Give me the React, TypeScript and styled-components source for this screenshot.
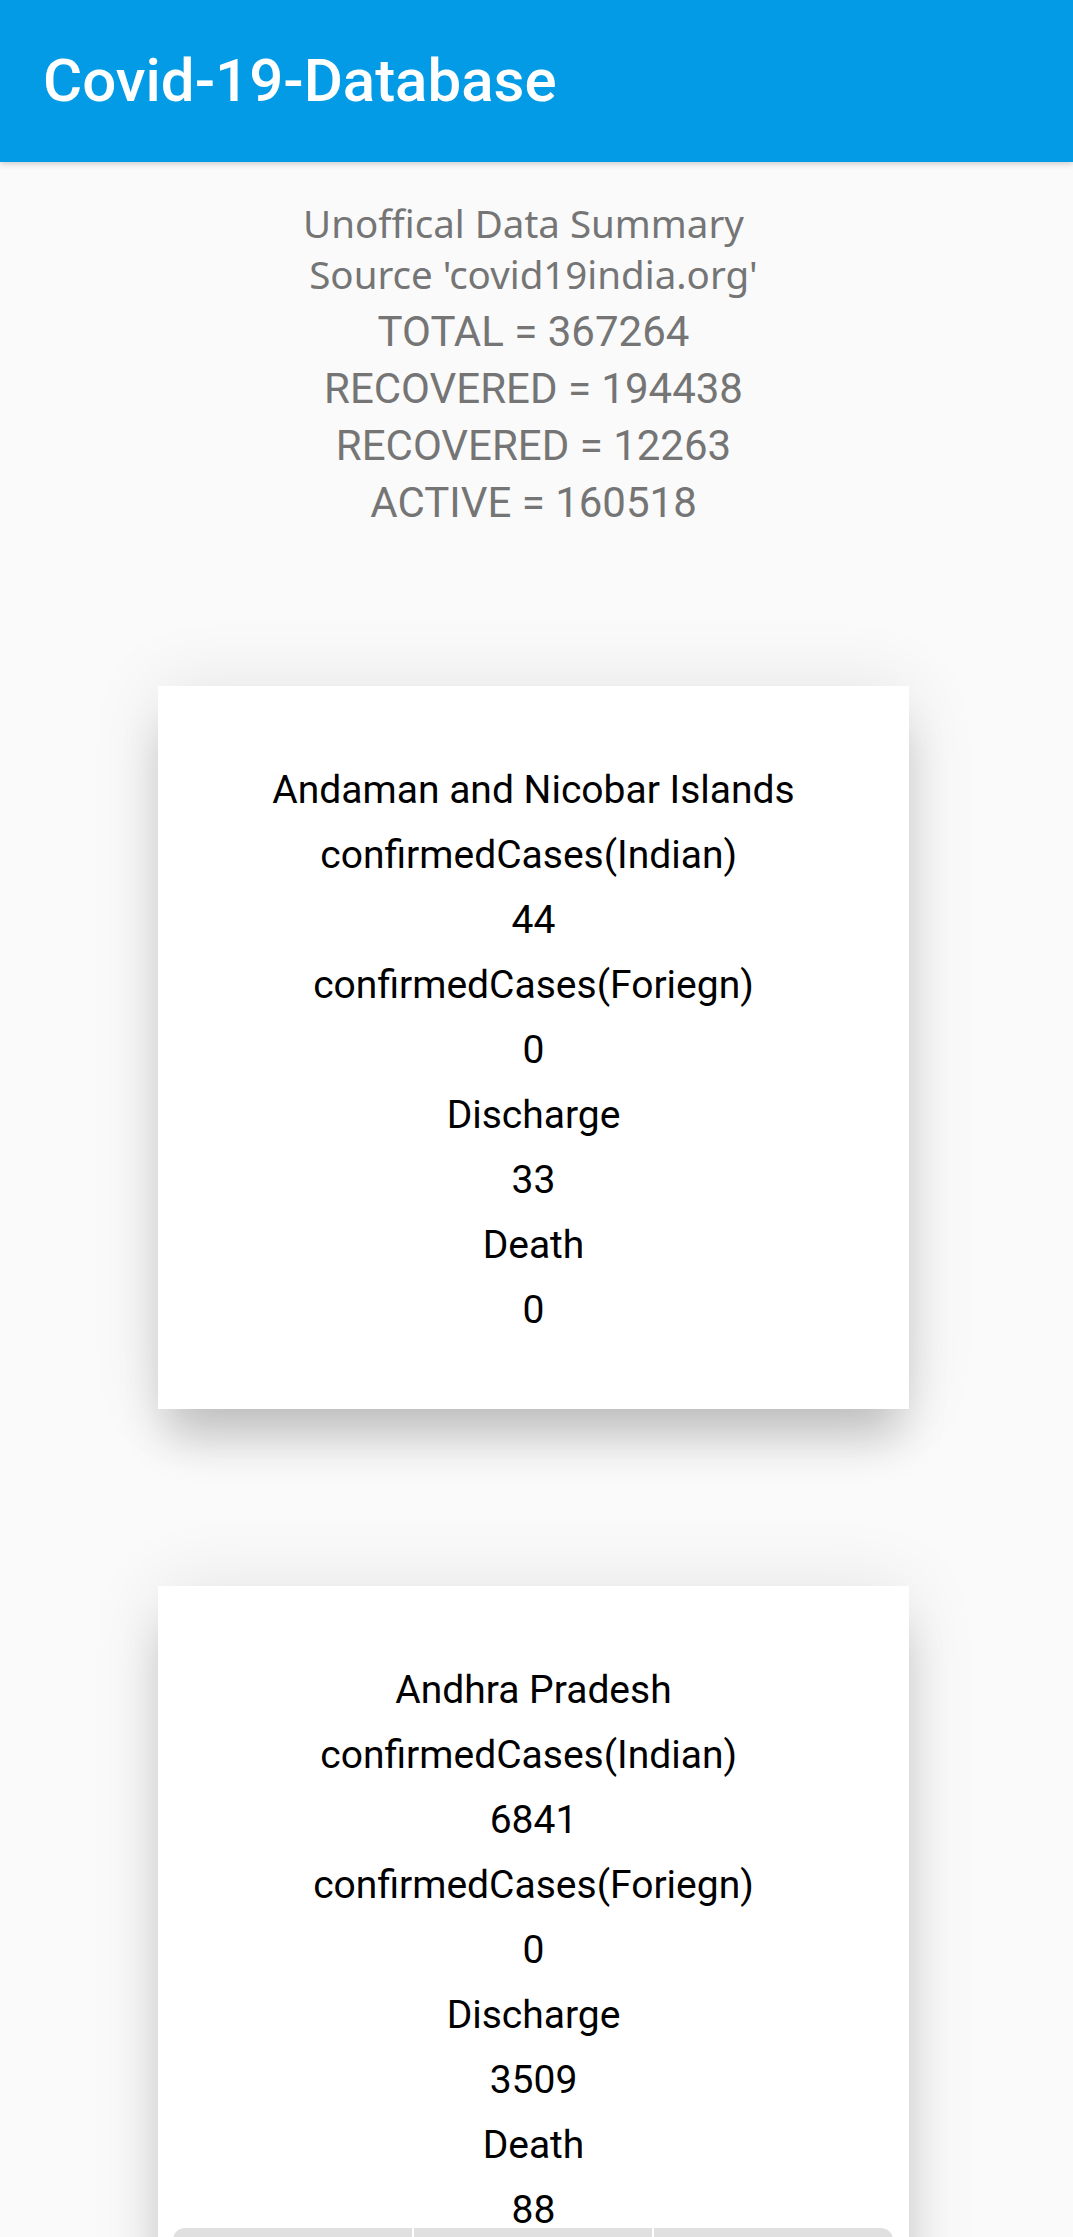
import React from "react";
import styled, { createGlobalStyle } from "styled-components";

const GlobalStyle = createGlobalStyle`
  html, body {
    margin: 0;
    padding: 0;
    background: #fafafa;
    font-family: Roboto, "Liberation Sans", Arial, sans-serif;
  }
  * { box-sizing: border-box; }
`;

const AppBar = styled.header`
  height: 162px;
  background: #039be5;
  display: flex;
  align-items: center;
  padding-left: 43px;
  box-shadow: 0 2px 6px rgba(0, 0, 0, 0.18);
  position: relative;
  z-index: 2;
`;

const Title = styled.h1`
  margin: 0;
  color: #ffffff;
  font-family: Roboto, "Liberation Sans", sans-serif;
  font-weight: 500;
  font-size: 60px;
  line-height: 1;
`;

const Main = styled.main`
  padding-right: 6px;
`;

const Summary = styled.section`
  padding: 36px 0 71px;
  text-align: center;
  color: #757575;
`;

const SummaryHead = styled.div`
  font-family: "Noto Sans", "Open Sans", sans-serif;
  font-size: 38.5px;
  line-height: 51px;
  white-space: pre;
  margin-bottom: 3px;
`;

const SummaryStat = styled.div`
  font-family: Roboto, sans-serif;
  font-size: 42px;
  line-height: 57px;
`;

const Item = styled.div<{ $top: number; $bottom: number }>`
  overflow: hidden;
  padding: ${(p) => p.$top}px 0 ${(p) => p.$bottom}px;
`;

const Card = styled.article`
  width: 751px;
  margin: 0 auto;
  background: #ffffff;
  padding: 84px 0 78px;
  display: flex;
  flex-direction: column;
  align-items: center;
  gap: 24px;
  box-shadow: 0 36px 44px -8px rgba(0, 0, 0, 0.2), 0 0 70px rgba(0, 0, 0, 0.09);
`;

const Line = styled.div`
  font-family: Roboto, sans-serif;
  font-size: 39px;
  line-height: 41px;
  color: #000000;
  white-space: pre;
`;

const BottomBar = styled.div`
  position: fixed;
  left: 173px;
  width: 720px;
  bottom: -20px;
  height: 29px;
  display: flex;
  gap: 2px;
  z-index: 5;
`;

const Segment = styled.div<{ $pos: "left" | "mid" | "right" }>`
  flex: 1;
  background: #e0e0e0;
  border-top-left-radius: ${(p) => (p.$pos === "left" ? "12px" : "0")};
  border-top-right-radius: ${(p) => (p.$pos === "right" ? "12px" : "0")};
`;

type StateData = {
  name: string;
  indian: string;
  foreign: string;
  discharge: string;
  death: string;
};

const states: StateData[] = [
  { name: "Andaman and Nicobar Islands", indian: "44", foreign: "0", discharge: "33", death: "0" },
  { name: "Andhra Pradesh", indian: "6841", foreign: "0", discharge: "3509", death: "88" },
];

const StateCard: React.FC<{ s: StateData }> = ({ s }) => (
  <Card>
    <Line>{s.name}</Line>
    <Line>{"confirmedCases(Indian) "}</Line>
    <Line>{s.indian}</Line>
    <Line>confirmedCases(Foriegn)</Line>
    <Line>{s.foreign}</Line>
    <Line>Discharge</Line>
    <Line>{s.discharge}</Line>
    <Line>Death</Line>
    <Line>{s.death}</Line>
  </Card>
);

export default function App() {
  return (
    <>
      <GlobalStyle />
      <AppBar>
        <Title>Covid-19-Database</Title>
      </AppBar>
      <Main>
        <Summary>
          <SummaryHead>{"Unoffical Data Summary  \nSource 'covid19india.org'"}</SummaryHead>
          <SummaryStat>TOTAL = 367264</SummaryStat>
          <SummaryStat>RECOVERED = 194438</SummaryStat>
          <SummaryStat>RECOVERED = 12263</SummaryStat>
          <SummaryStat>ACTIVE = 160518</SummaryStat>
        </Summary>
        {states.map((s) => (
          <Item key={s.name} $top={84} $bottom={93}>
            <StateCard s={s} />
          </Item>
        ))}
      </Main>
      <BottomBar>
        <Segment $pos="left" />
        <Segment $pos="mid" />
        <Segment $pos="right" />
      </BottomBar>
    </>
  );
}
